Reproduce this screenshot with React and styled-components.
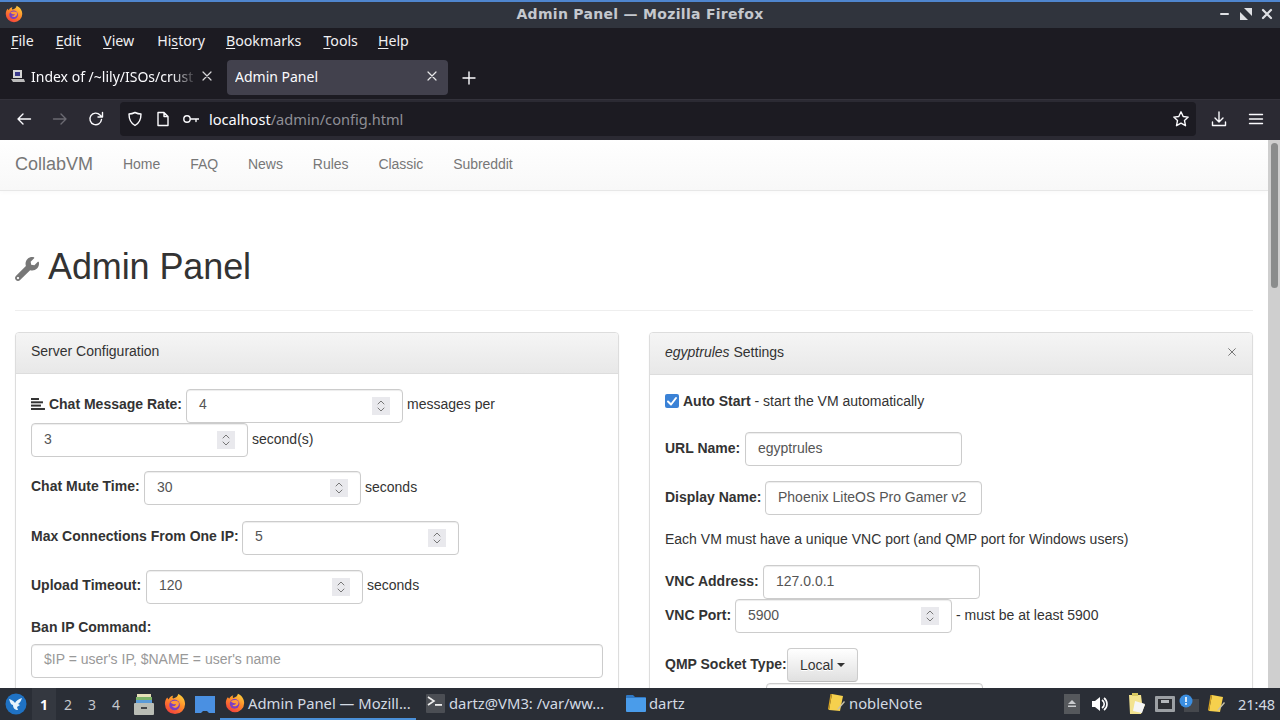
import React, { useId } from "react";
import styled, { createGlobalStyle } from "styled-components";
import { FaWrench } from "react-icons/fa";

const Global = createGlobalStyle`
  html, body { margin: 0; padding: 0; background: #1c1b22; }
  * { box-sizing: border-box; }
`;

const Screen = styled.div`
  width: 1280px; height: 720px; overflow: hidden;
  display: flex; flex-direction: column;
  font-family: "Noto Sans", sans-serif;
`;

/* window title bar */
const TitleBar = styled.div`
  height: 28px; flex: none; background: #30343d; border-top: 2px solid #4f86cf;
  display: grid; grid-template-columns: 200px 1fr 200px; align-items: center; color: #d8dbe0;
`;
const TitleIcon = styled.div`padding-left: 5px; display: flex; margin-top: -2px;`;
const TitleText = styled.div`
  text-align: center; font: 700 14px "DejaVu Sans", sans-serif; letter-spacing: 0.3px;
  color: #c4c8ce; margin-top: -2px;
`;
const WindowButtons = styled.div`
  display: flex; justify-content: flex-end; gap: 9px; padding-right: 7px; margin-top: -2px;
`;

/* menu */
const MenuBar = styled.div`
  height: 32px; flex: none; background: #1c1b22; display: flex; align-items: center; color: #f0f0f2;
  font-size: 14.2px; padding-bottom: 7px;
`;
const MenuItem = styled.span`
  padding: 0 ${p => p.$pr ?? 11}px 0 ${p => p.$pl ?? 11}px;
  u { text-underline-offset: 2px; text-decoration-thickness: 1px; }
`;

/* tabs */
const TabStrip = styled.div`
  height: 39px; flex: none; background: #1c1b22; display: flex; align-items: flex-start; color: #fbfbfe; font-size: 14px;
`;
const Tab = styled.div`
  height: 35px; display: flex; align-items: center;
  width: ${p => p.$w}px; flex: none; margin-right: ${p => p.$mr || 0}px;
  padding: ${p => (p.$active ? "0 10px 3px 8px" : "0 9px 3px 10px")};
  background: ${p => (p.$active ? "#42414d" : "transparent")};
  border-radius: 4px;
`;
const TabLabel = styled.span`
  flex: 1; overflow: hidden; white-space: nowrap; margin-left: ${p => p.$ml || 0}px; margin-right: 4px;
  ${p => p.$fade && "mask-image: linear-gradient(90deg, #000 85%, transparent 100%);"}
`;
const NewTab = styled.div`
  width: 42px; height: 35px; display: flex; align-items: center; justify-content: center;
`;

/* toolbar */
const Toolbar = styled.div`
  height: 41px; flex: none; background: #2b2a33; display: flex; align-items: center;
  border-top: 1px solid #33323b; padding-bottom: 2px;
`;
const NavButtons = styled.div`
  width: 120px; flex: none; display: flex; justify-content: space-between; padding: 0 16px;
`;
const UrlBar = styled.div`
  width: 1076px; flex: none; height: 34px; background: #1c1b22; border-radius: 4px;
  display: flex; align-items: center; padding: 0 6px 0 7px; color: #fbfbfe; font-size: 14.6px;
`;
const UrlIcons = styled.div`display: flex; align-items: center; gap: 10px;`;
const UrlText = styled.span`
  flex: 1; margin-left: 10px;
  span { color: #8f8f96; }
`;
const ToolRight = styled.div`
  flex: 1; display: flex; justify-content: space-between; padding: 0 16px 0 15px;
`;

/* page */
const Viewport = styled.div`
  flex: 1; min-height: 0; display: flex; background: #fff; overflow: hidden;
  font-family: "Liberation Sans", Arial, sans-serif; font-size: 14px; color: #333;
`;
const PageArea = styled.div`flex: 1; min-width: 0; overflow: hidden;`;
const Scrollbar = styled.div`
  width: 12px; flex: none; background: #cfcfcf; padding: 3px 2px 0 3px;
`;
const Thumb = styled.div`height: 145px; background: #8a8c8c; border-radius: 4px;`;

const Navbar = styled.div`
  height: 51px; display: flex; align-items: center; padding: 0 0 2px 15px;
  background: linear-gradient(#fff, #f8f8f8); border-bottom: 1px solid #e7e7e7;
  box-shadow: inset 0 1px 0 rgba(255,255,255,.15), 0 1px 5px rgba(0,0,0,.03);
`;
const Brand = styled.span`font-size: 18px; color: #777; padding-right: 15px;`;
const NavLink = styled.span`color: #777; padding: 0 15px; letter-spacing: -0.05px;`;

const Container = styled.div`padding: 0 15px;`;
const PageHeader = styled.div`
  margin: 56px 0 21px; padding-bottom: 23px; border-bottom: 1px solid #eee;
  display: flex; align-items: center;
`;
const HeaderIcon = styled.div`width: 33px; flex: none; display: flex; color: #777; margin-top: 3px;`;
const H1 = styled.h1`margin: 0; font-size: 36px; font-weight: 500; line-height: 40px; color: #333; letter-spacing: -0.1px;`;

const Columns = styled.div`display: grid; grid-template-columns: 604px 604px; gap: 30px;`;
const Panel = styled.div`
  border: 1px solid #ddd; border-radius: 4px; box-shadow: 0 1px 2px rgba(0,0,0,.05); background: #fff;
`;
const PanelHeading = styled.div`
  height: ${p => p.$h}px; padding: 0 15px 4px; display: flex; align-items: center; justify-content: space-between;
  background: linear-gradient(#f5f5f5, #e8e8e8); border-bottom: 1px solid #ddd; border-radius: 3px 3px 0 0;
  em { font-style: italic; }
`;
const CloseX = styled.span`display: flex; margin-top: 1px;`;
const PanelBody = styled.div`padding: 15px;`;

const Row = styled.div`
  display: flex; flex-wrap: wrap; align-items: center; column-gap: 4px;
  margin-bottom: ${p => p.$mb || 0}px;
  ${p => p.$h && `height: ${p.$h}px;`}
`;
const Label = styled.label`
  font-weight: 700; display: inline-flex; align-items: center; gap: 4px; margin-top: ${p => p.$mt ?? -5}px;
  white-space: nowrap; flex: none; width: ${p => p.$w}px;
`;
const Note = styled.span`margin-top: ${p => p.$mt ?? -3}px;`;
const CheckNote = styled.span``;
const Plain = styled.div`height: 20px; line-height: 20px; margin-bottom: ${p => p.$mb || 0}px; margin-top: ${p => p.$mt || 0}px;
  font-weight: ${p => (p.$bold ? 700 : 400)};`;
const Field = styled.div`
  width: ${p => p.$w || 217}px; height: 34px; border: 1px solid #ccc; border-radius: 4px; background: #fff;
  box-shadow: inset 0 1px 1px rgba(0,0,0,.075); padding: 0 12px ${p => p.$pb ?? 3}px 12px; color: ${p => (p.$ph ? "#999" : "#555")};
  display: flex; align-items: center; justify-content: space-between; flex: none;
  margin-left: ${p => p.$ml || 0}px;
`;
const Spinner = styled.div`
  width: 18px; height: 18px; background: #e9e9ed; display: flex; margin-top: ${p => p.$mt ?? 3}px;
`;
const Check = styled.span`
  width: 14px; height: 14px; border-radius: 2px; background: #3b82d6; display: inline-flex;
`;
const DropButton = styled.div`
  height: 34px; padding: 0 12px 1px; display: inline-flex; align-items: center; gap: 4px;
  border: 1px solid #ccc; border-bottom-color: #bbb; border-radius: 4px;
  background: linear-gradient(#fff, #e0e0e0); text-shadow: 0 1px 0 #fff;
`;
const Caret = styled.span`
  width: 0; height: 0; border-top: 4px solid #333; border-left: 4px solid transparent; border-right: 4px solid transparent;
`;

/* task bar */
const Taskbar = styled.div`
  height: 32px; flex: none; background: #2a2e36; display: flex; align-items: center;
  color: #d3dae3; font-size: 14.8px;
`;
const Launcher = styled.div`width: 32px; padding-left: 5px; flex: none; display: flex;`;
const Workspace = styled.div`
  width: 24px; height: 32px; flex: none; display: flex; align-items: center; justify-content: center;
  font-size: 14px; color: ${p => (p.$active ? "#fff" : "#c5c8ce")}; font-weight: ${p => (p.$active ? 700 : 400)};
  background: ${p => (p.$active ? "#343840" : "transparent")};
`;
const QuickIcon = styled.div`width: ${p => p.$w || 30}px; flex: none; display: flex; justify-content: center;`;
const Task = styled.div`
  width: ${p => p.$w}px; height: 32px; flex: none; display: flex; align-items: center; gap: ${p => p.$gap ?? 3}px;
  padding-left: ${p => p.$pl ?? 6}px; white-space: nowrap;
  border-bottom: ${p => (p.$active ? "2px solid #4a90d9" : "2px solid transparent")};
`;
const Tray = styled.div`
  margin-left: auto; display: flex; align-items: center; padding-right: 5px;
`;
const TrayIcon = styled.div`width: ${p => p.$w || 26}px; flex: none; display: flex; justify-content: center;`;
const Clock = styled.span`margin-left: 9px; font-size: 14.5px;`;

/* drawings */
const Firefox = ({ s = 18 }) => {
  const id = useId();
  return (
    <svg width={s} height={s} viewBox="0 0 24 24">
      <defs>
        <linearGradient id={id} x1="0.8" y1="0" x2="0.2" y2="1">
          <stop offset="0" stopColor="#ffd23c" />
          <stop offset=".45" stopColor="#ff8a2a" />
          <stop offset="1" stopColor="#f0393f" />
        </linearGradient>
      </defs>
      <path d="M12 23a11 11 0 0 1-11-11c0-3 1-5.500 2.500-7l1.500 2C6 4 9 2.500 10 3c-1 1.500-1 2.500 0 3 3-1 5-2 5.500-5C20 3 23 7 23 12a11 11 0 0 1-11 11z" fill={`url(#${id})`} />
      <circle cx="11.500" cy="13" r="5.800" fill="#7b3fc4" />
      <path d="M7 10c3-2 7-2 9 0 1 3-1 6-4 6-2 0-3-1-3-2 2 1 4 0 4-2-2 1-4 0-6-2z" fill="#ff9a3a" />
    </svg>
  );
};
const S = ({ w = 16, h = 16, vb = "0 0 16 16", c = "#fbfbfe", sw = 1.400, children }) => (
  <svg width={w} height={h} viewBox={vb} fill="none" stroke={c} strokeWidth={sw} strokeLinecap="round" strokeLinejoin="round">{children}</svg>
);
const Lines = () => (
  <svg width="14" height="12" viewBox="0 0 14 12" fill="#333">
    <rect x="0" y="0" width="8" height="2" /><rect x="0" y="3.300" width="12" height="2" />
    <rect x="0" y="6.600" width="10" height="2" /><rect x="0" y="10" width="14" height="2" />
  </svg>
);
const Spin = ({ mt }) => (
  <Spinner $mt={mt}>
    <S w={18} h={18} vb="0 0 18 18" c="#777" sw={1}><path d="M6 7l3-3 3 3M6 11l3 3 3-3" /></S>
  </Spinner>
);
const NoteIcon = ({ s = 20 }) => (
  <svg width={s} height={s} viewBox="0 0 20 20">
    <path d="M6 1l11 2-3 15-11-1z" fill="#f6d04d" />
    <path d="M3 17l3-16-1.500 0L2 16z" fill="#d9a520" />
    <path d="M18 8l1 1-6 7-2 1 1-2z" fill="#c9c2a8" />
  </svg>
);
const FolderIcon = ({ w = 20, h = 18 }) => (
  <svg width={w} height={h} viewBox="0 0 20 18">
    <path d="M0 2a1 1 0 0 1 1-1h6l2 2h10a1 1 0 0 1 1 1v1H0z" fill="#2f78c4" />
    <path d="M0 4h20v13a1 1 0 0 1-1 1H1a1 1 0 0 1-1-1z" fill="#4a9cea" />
  </svg>
);
const TerminalIcon = () => (
  <svg width="19" height="19" viewBox="0 0 19 19">
    <rect width="19" height="19" rx="1" fill="#4b4e54" />
    <path d="M2 3l6 4-6 4" stroke="#eee" strokeWidth="1.600" fill="none" />
    <rect x="9" y="10" width="7" height="1.800" fill="#eee" />
  </svg>
);

const Xmark = ({ c = "#fbfbfe", s = 12 }) => (
  <S w={s} h={s} vb="0 0 12 12" c={c} sw={1.200}><path d="M2 2l8 8M10 2l-8 8" /></S>
);

export default function App() {
  return (
    <Screen>
      <Global />
      <TitleBar>
        <TitleIcon><Firefox s={18} /></TitleIcon>
        <TitleText>Admin Panel — Mozilla Firefox</TitleText>
        <WindowButtons>
          <S w={12} h={12} vb="0 0 12 12" c="#dfe1e5" sw={2}><path d="M2 6h7" /></S>
          <svg width="12" height="12" viewBox="0 0 12 12" fill="#dfe1e5"><path d="M0 12V4l8 8zM12 0v8L4 0z" /></svg>
          <S w={12} h={12} vb="0 0 12 12" c="#dfe1e5" sw={2.200}><path d="M2 2l8 8M10 2l-8 8" /></S>
        </WindowButtons>
      </TitleBar>

      <MenuBar>
        <MenuItem><u>F</u>ile</MenuItem>
        <MenuItem><u>E</u>dit</MenuItem>
        <MenuItem><u>V</u>iew</MenuItem>
        <MenuItem $pl={12}>Hi<u>s</u>tory</MenuItem>
        <MenuItem $pl={10}><u>B</u>ookmarks</MenuItem>
        <MenuItem $pr={10}><u>T</u>ools</MenuItem>
        <MenuItem $pl={10}><u>H</u>elp</MenuItem>
      </MenuBar>

      <TabStrip>
        <Tab $w={222} $mr={5}>
          <svg width="15" height="15" viewBox="0 0 15 15">
            <rect x="3" y="1" width="9" height="8" fill="#d5d5d5" /><rect x="5" y="3" width="5" height="4" fill="#3a3a8c" />
            <path d="M1 10h13l1 3H3z" fill="#bbb" />
          </svg>
          <TabLabel $ml={6} $fade>Index of /~lily/ISOs/crust</TabLabel>
          <Xmark c="#d8d8da" />
        </Tab>
        <Tab $w={221} $active>
          <TabLabel>Admin Panel</TabLabel>
          <Xmark c="#e8e8ea" />
        </Tab>
        <NewTab>
          <S w={14} h={14} vb="0 0 14 14" sw={1.400}><path d="M7 1v12M1 7h12" /></S>
        </NewTab>
      </TabStrip>

      <Toolbar>
        <NavButtons>
          <S><path d="M14.500 8H2M7 3L2 8l5 5" /></S>
          <S c="#6b6a72"><path d="M1.500 8H14M9 3l5 5-5 5" /></S>
          <S><path d="M13.500 8.500a5.800 5.800 0 1 1-1.500-4.500l2 2M14.500 1.500V6H10" /></S>
        </NavButtons>
        <UrlBar>
          <UrlIcons>
            <S w={16} h={16}><path d="M8 1.500c2 1 4 1.500 6 1.500 0 5-1.500 9-6 11.500C3.500 12 2 8 2 3c2 0 4-.500 6-1.500z" /></S>
            <S w={18} h={16}><path d="M4 1.500h6l4 4v9H4zM10 1.500v4h4" /></S>
            <S w={18} h={16}><circle cx="5" cy="8" r="3.200" /><path d="M8.500 8H17M14 8v2.500" /></S>
          </UrlIcons>
          <UrlText>localhost<span>/admin/config.html</span></UrlText>
          <S w={18} h={18} vb="0 0 18 18"><path d="M9 1.800l2.200 4.700 5 .6-3.700 3.500 1 5.100L9 13.200l-4.500 2.500 1-5.100L1.800 7.100l5-.6z" /></S>
        </UrlBar>
        <ToolRight>
          <S><path d="M8 1v10M4 7l4 4 4-4M1.500 11v3.500h13V11" /></S>
          <S><path d="M1.500 3.500h13M1.500 8h13M1.500 12.500h13" /></S>
        </ToolRight>
      </Toolbar>

      <Viewport>
        <PageArea>
          <Navbar>
            <Brand>CollabVM</Brand>
            <NavLink>Home</NavLink>
            <NavLink>FAQ</NavLink>
            <NavLink>News</NavLink>
            <NavLink>Rules</NavLink>
            <NavLink>Classic</NavLink>
            <NavLink>Subreddit</NavLink>
          </Navbar>
          <Container>
            <PageHeader>
              <HeaderIcon><FaWrench size={24} /></HeaderIcon>
              <H1>Admin Panel</H1>
            </PageHeader>
            <Columns>
              <Panel>
                <PanelHeading $h={41}>Server Configuration</PanelHeading>
                <PanelBody>
                  <Row $mb={14}>
                    <Label $w={151}><Lines />Chat Message Rate:</Label>
                    <Field $pb={5}>4<Spin mt={5} /></Field>
                    <Note $mt={-5}>messages per</Note>
                    <Field>3<Spin /></Field>
                    <Note>second(s)</Note>
                  </Row>
                  <Row $mb={16}>
                    <Label $w={109}>Chat Mute Time:</Label>
                    <Field>30<Spin /></Field>
                    <Note>seconds</Note>
                  </Row>
                  <Row $mb={15}>
                    <Label $w={207}>Max Connections From One IP:</Label>
                    <Field $pb={5}>5<Spin mt={5} /></Field>
                  </Row>
                  <Row>
                    <Label $w={111}>Upload Timeout:</Label>
                    <Field $pb={5}>120<Spin mt={5} /></Field>
                    <Note $mt={-5}>seconds</Note>
                  </Row>
                  <Plain $bold $mt={13} $mb={7}>Ban IP Command:</Plain>
                  <Field $w={572} $ph $pb={5}>$IP = user's IP, $NAME = user's name</Field>
                </PanelBody>
              </Panel>
              <Panel>
                <PanelHeading $h={42}>
                  <span><em>egyptrules</em> Settings</span>
                  <CloseX><Xmark c="#777" s={10} /></CloseX>
                </PanelHeading>
                <PanelBody>
                  <Row $h={22} $mb={20}>
                    <Check>
                      <S w={14} h={14} vb="0 0 14 14" c="#fff" sw={2}><path d="M3 7.500l3 3 5-6.500" /></S>
                    </Check>
                    <CheckNote><b>Auto Start</b> - start the VM automatically</CheckNote>
                  </Row>
                  <Row $mb={15}>
                    <Label $w={76} $mt={-3}>URL Name:</Label>
                    <Field>egyptrules</Field>
                  </Row>
                  <Row $mb={14}>
                    <Label $w={96} $mt={-3}>Display Name:</Label>
                    <Field>Phoenix LiteOS Pro Gamer v2</Field>
                  </Row>
                  <Plain $mb={16}>Each VM must have a unique VNC port (and QMP port for Windows users)</Plain>
                  <Row>
                    <Label $w={94} $mt={-3}>VNC Address:</Label>
                    <Field>127.0.0.1</Field>
                  </Row>
                  <Row $mb={15}>
                    <Label $w={66} $mt={-3}>VNC Port:</Label>
                    <Field>5900<Spin /></Field>
                    <Note>- must be at least 5900</Note>
                  </Row>
                  <Row $mb={1}>
                    <Label $w={118} $mt={-3}>QMP Socket Type:</Label>
                    <DropButton>Local<Caret /></DropButton>
                  </Row>
                  <Field $ml={101} />
                </PanelBody>
              </Panel>
            </Columns>
          </Container>
        </PageArea>
        <Scrollbar><Thumb /></Scrollbar>
      </Viewport>

      <Taskbar>
        <Launcher>
          <svg width="22" height="22" viewBox="0 0 22 22">
            <circle cx="11" cy="11" r="10.500" fill="#1f72c4" />
            <path d="M4 6c3 1 5 2 6 4 1-2 3-4 7-5-1 3-2 5-4 6l2 1-3 2 1 3c-3 0-5-2-5-5-2 0-3-3-4-6z" fill="#e8f3fb" />
          </svg>
        </Launcher>
        <Workspace $active>1</Workspace>
        <Workspace>2</Workspace>
        <Workspace>3</Workspace>
        <Workspace>4</Workspace>
        <QuickIcon $w={31}>
          <svg width="20" height="22" viewBox="0 0 20 22">
            <rect x="3" y="1" width="14" height="4" fill="#e6e0b8" />
            <rect x="2" y="4" width="16" height="3" fill="#7db36a" />
            <rect x="2" y="7" width="16" height="3" fill="#5a9bd8" />
            <rect x="0" y="10" width="20" height="12" rx="1" fill="#b9bdb6" />
            <rect x="7" y="14" width="6" height="2" fill="#44474a" />
          </svg>
        </QuickIcon>
        <QuickIcon $w={31}><Firefox s={22} /></QuickIcon>
        <QuickIcon $w={30}>
          <svg width="20" height="17" viewBox="0 0 20 17"><path d="M0 0h20v17h-6l-2-2H8l-2 2H0z" fill="#4a90e2" /></svg>
        </QuickIcon>
        <Task $w={196} $active $pl={5}><Firefox s={20} /><span>Admin Panel — Mozill...</span></Task>
        <Task $w={200} $pl={10} $gap={4}><TerminalIcon /><span>dartz@VM3: /var/ww...</span></Task>
        <Task $w={200} $pl={10}><FolderIcon /><span>dartz</span></Task>
        <Task $w={120} $pl={10}><NoteIcon /><span>nobleNote</span></Task>
        <Tray>
          <TrayIcon $w={18}>
            <svg width="16" height="20" viewBox="0 0 16 20"><rect width="16" height="20" fill="#55585c" /><path d="M8 6l4 4H4z" fill="#c9cbce" /><rect x="4" y="11.500" width="8" height="1.500" fill="#c9cbce" /></svg>
          </TrayIcon>
          <TrayIcon $w={38}>
            <svg width="18" height="18" viewBox="0 0 18 18"><path d="M1 6h3l5-4v14l-5-4H1z" fill="#fff" /><path d="M11 5c3 2 3 6 0 8M13 3c4 3 4 9 0 12" stroke="#fff" strokeWidth="1.600" fill="none" /></svg>
          </TrayIcon>
          <TrayIcon $w={36}>
            <svg width="22" height="22" viewBox="0 0 22 22"><path d="M3 2h12l1 8 3 2-4 9H4z" fill="#f3e38f" /><path d="M9 8l10 3-3 9-9-2z" fill="#f5f5f5" /><rect x="6" y="0" width="6" height="3" fill="#d8c860" /></svg>
          </TrayIcon>
          <TrayIcon $w={20}>
            <svg width="20" height="16" viewBox="0 0 20 16"><rect width="20" height="16" rx="1" fill="#9ca0a4" /><rect x="3" y="3" width="14" height="10" fill="#2d2f33" /><path d="M6 4h8v3h-8z" fill="#b4b7ba" /></svg>
          </TrayIcon>
          <TrayIcon $w={28}>
            <svg width="20" height="20" viewBox="0 0 20 20"><rect x="5" y="5" width="15" height="13" fill="#45484d" /><circle cx="7" cy="7" r="6.500" fill="#3b8ee0" /><rect x="6.200" y="3" width="1.600" height="5" fill="#fff" /><rect x="6.200" y="9" width="1.600" height="1.800" fill="#fff" /></svg>
          </TrayIcon>
          <TrayIcon $w={26}><NoteIcon s={20} /></TrayIcon>
          <Clock>21:48</Clock>
        </Tray>
      </Taskbar>
    </Screen>
  );
}
